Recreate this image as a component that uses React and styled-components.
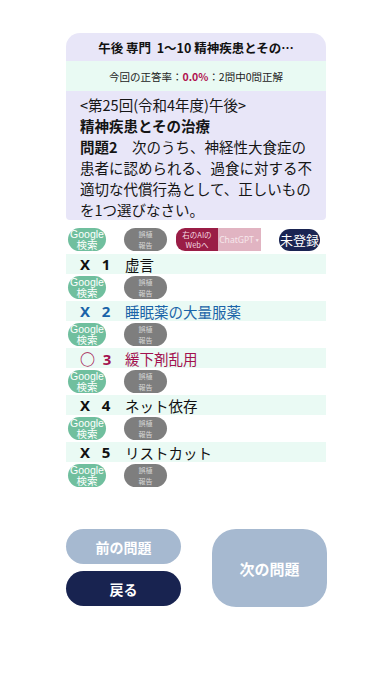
import React from "react";
import styled, { createGlobalStyle } from "styled-components";

const Global = createGlobalStyle`
  html, body { margin: 0; padding: 0; background: #ffffff; }
  body { font-family: "Noto Sans CJK JP", "Noto Sans", sans-serif; color: #111; }
`;

const Page = styled.div`
  width: 260px;
  margin: 0 auto;
  padding-top: 33px;
`;

const Card = styled.div`
  background: #e8e6f8;
  border-radius: 14px 14px 4px 4px;
  overflow: hidden;
`;

const Title = styled.div`
  height: 28px;
  display: flex;
  align-items: center;
  justify-content: center;
  font-size: 12.5px;
  font-weight: 700;
  white-space: nowrap;
`;

const Rate = styled.div`
  height: 30px;
  display: flex;
  align-items: center;
  justify-content: center;
  background: #e9faf3;
  font-size: 10.5px;
  color: #222;
`;

const Pct = styled.span`
  color: #b0124f;
  font-weight: 700;
`;

const Question = styled.div`
  padding: 3px 12px 0 14px;
  font-size: 14.5px;
  line-height: 21px;
  color: #151515;
`;

const Bold = styled.span`
  font-weight: 700;
`;

const Line = styled.div``;

const BtnRow = styled.div`
  display: flex;
  align-items: center;
  gap: 18px;
  padding-left: 2px;
  height: 23px;
  margin: ${(p) => p.$m || "2px 0"};
`;

const Pill = styled.div`
  width: ${(p) => p.$w}px;
  height: 23px;
  border-radius: 12px;
  background: ${(p) => p.$bg};
  color: ${(p) => p.$fg};
  font-size: ${(p) => p.$fs}px;
  line-height: ${(p) => p.$lh}px;
  display: flex;
  flex-direction: column;
  align-items: center;
  justify-content: center;
  text-align: center;
  flex-shrink: 0;
  font-family: ${(p) => p.$latin ? '"Liberation Sans", "Noto Sans CJK JP", sans-serif' : '"Noto Sans CJK JP", sans-serif'};
`;

const AiGroup = styled.div`
  display: flex;
  height: 23px;
  margin-left: -9px;
`;

const AiLeft = styled.div`
  width: 42px;
  background: #9a1d46;
  border-radius: 9px 0 0 9px;
  color: #f3d9e0;
  font-size: 7.5px;
  line-height: 10px;
  display: flex;
  flex-direction: column;
  align-items: center;
  justify-content: center;
`;

const AiRight = styled.div`
  width: 43px;
  background: #e1b4c2;
  color: #f7e8ec;
  font-size: 8.5px;
  display: flex;
  align-items: center;
  justify-content: center;
  font-family: "Noto Sans", sans-serif;
`;

const Caret = styled.span`
  font-size: 5px;
  margin-left: 1px;
`;

const Register = styled.div`
  margin-left: auto;
  margin-right: 6px;
  width: 43px;
  height: 22px;
  border-radius: 11px;
  background: #1a2452;
  color: #fff;
  font-size: 13px;
  display: flex;
  align-items: center;
  justify-content: center;
`;

const Option = styled.div`
  height: 20px;
  background: #eafaf4;
  display: flex;
  align-items: center;
  font-size: 14.5px;
  color: ${(p) => p.$c};
`;

const Mark = styled.span`
  width: 59px;
  padding-left: 14px;
  box-sizing: border-box;
  font-weight: 700;
  white-space: pre;
  font-size: 15px;
  font-family: "Noto Sans", "Noto Sans CJK JP", sans-serif;
`;

const Footer = styled.div`
  display: flex;
  justify-content: space-between;
  margin-top: 42px;
`;

const Col = styled.div`
  display: flex;
  flex-direction: column;
  gap: 7px;
`;

const NavBtn = styled.div`
  width: 115px;
  height: ${(p) => p.$h}px;
  border-radius: ${(p) => p.$r}px;
  background: ${(p) => p.$bg};
  color: #fff;
  font-size: ${(p) => p.$fs}px;
  font-weight: 700;
  display: flex;
  align-items: center;
  justify-content: center;
  margin-right: ${(p) => p.$mr || 0}px;
`;

const GoogleBtn = () => (
  <Pill $w={38} $bg="#70bf9e" $fg="#fff" $fs={10.5} $lh={10.5} $latin>
    <span>Google</span>
    <span>検索</span>
  </Pill>
);

const ReportBtn = () => (
  <Pill $w={43} $bg="#7e7e7e" $fg="#d8d8d8" $fs={7} $lh={11}>
    <span>誤植</span>
    <span>報告</span>
  </Pill>
);

const options = [
  { mark: "X   1", text: "虚言", c: "#111" },
  { mark: "X   2", text: "睡眠薬の大量服薬", c: "#1a64a8" },
  { mark: "○  3", text: "緩下剤乱用", c: "#a3124f" },
  { mark: "X   4", text: "ネット依存", c: "#111" },
  { mark: "X   5", text: "リストカット", c: "#111" },
];

export default function App() {
  return (
    <>
      <Global />
      <Page>
        <Card>
          <Title>午後 専門&nbsp; 1〜10 精神疾患とその…</Title>
          <Rate>
            今回の正答率：<Pct>0.0%</Pct>：2問中0問正解
          </Rate>
          <Question>
            <Line>&lt;第25回(令和4年度)午後&gt;</Line>
            <Line><Bold>精神疾患とその治療</Bold></Line>
            <Line>
              <Bold>問題2　</Bold>次のうち、神経性大食症の患者に認められる、過食に対する不適切な代償行為として、正しいものを1つ選びなさい。
            </Line>
          </Question>
        </Card>
        <BtnRow $m="8px 0 3px">
          <GoogleBtn />
          <ReportBtn />
          <AiGroup>
            <AiLeft>
              <span>右のAIの</span>
              <span>Webへ</span>
            </AiLeft>
            <AiRight>
              ChatGPT<Caret>▼</Caret>
            </AiRight>
          </AiGroup>
          <Register>未登録</Register>
        </BtnRow>
        {options.map((o) => (
          <React.Fragment key={o.mark}>
            <Option $c={o.c}>
              <Mark>{o.mark}</Mark>
              <span>{o.text}</span>
            </Option>
            <BtnRow>
              <GoogleBtn />
              <ReportBtn />
            </BtnRow>
          </React.Fragment>
        ))}
        <Footer>
          <Col>
            <NavBtn $h={35} $r={18} $fs={14} $bg="#a6b9d0">前の問題</NavBtn>
            <NavBtn $h={35} $r={18} $fs={14} $bg="#182350">戻る</NavBtn>
          </Col>
          <NavBtn $h={78} $r={24} $fs={15} $bg="#a6b9d0" $mr={-1}>次の問題</NavBtn>
        </Footer>
      </Page>
    </>
  );
}
